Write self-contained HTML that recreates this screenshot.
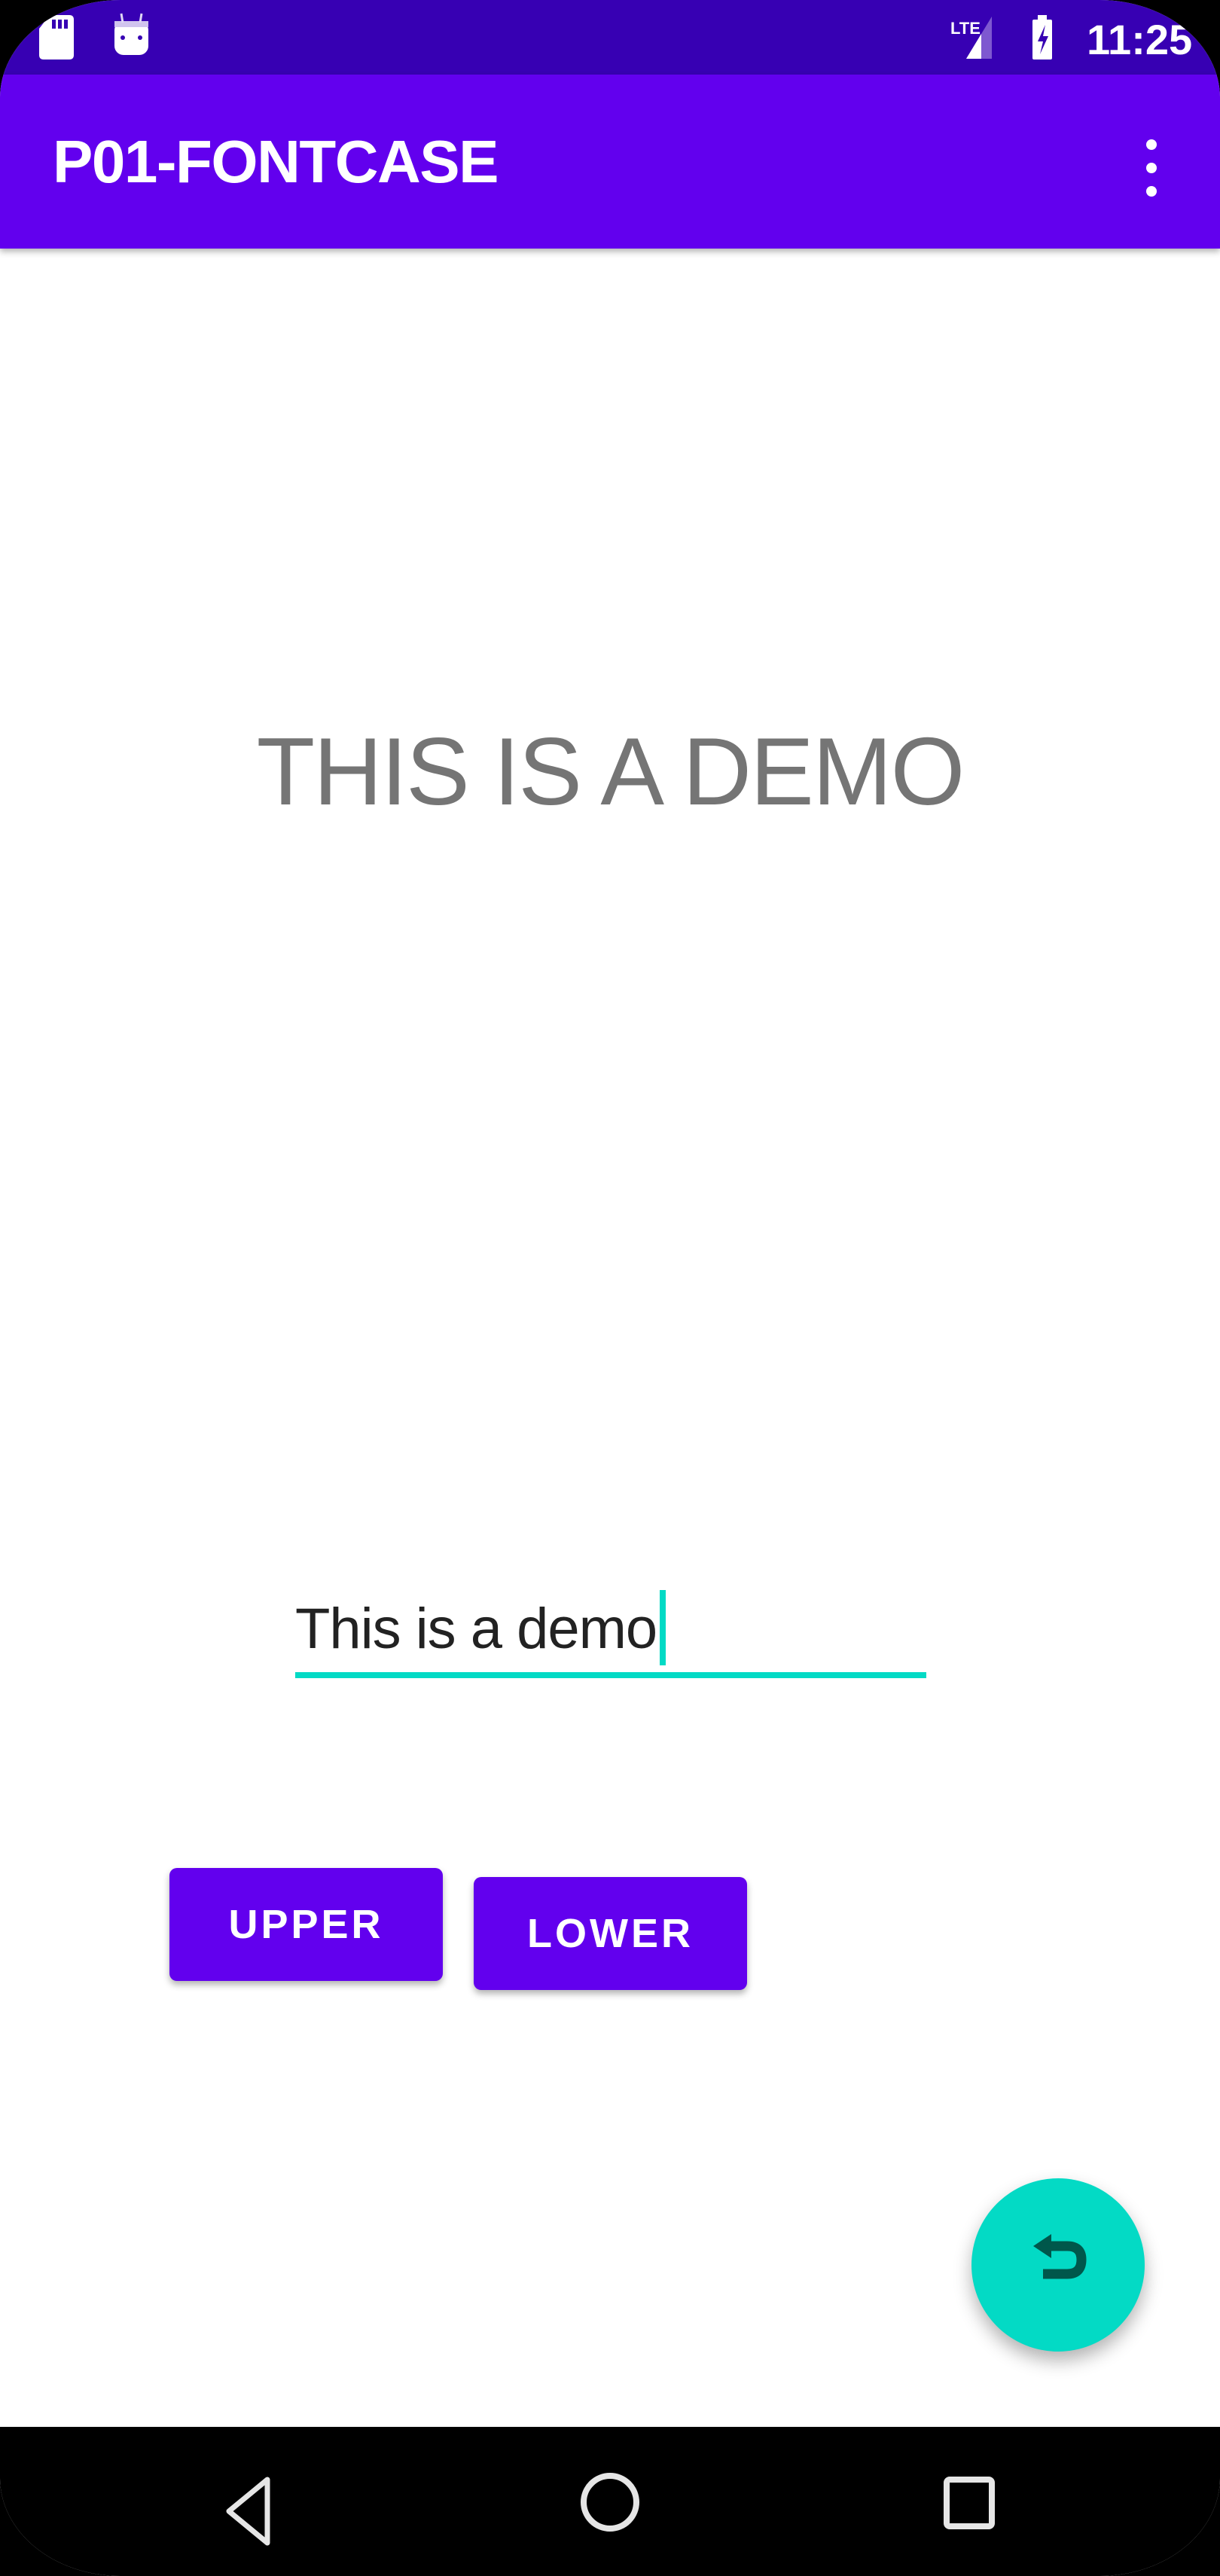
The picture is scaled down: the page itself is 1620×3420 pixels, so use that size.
<!DOCTYPE html>
<html><head><meta charset="utf-8"><style>
*{margin:0;padding:0;box-sizing:border-box}
html,body{width:1620px;height:3420px;background:#000;overflow:hidden}
.ph{position:absolute;left:0;top:0;width:1620px;height:3420px;background:#fff;border-radius:160px 160px 160px 160px/130px 130px 130px 130px;overflow:hidden;font-family:"Liberation Sans",sans-serif}
.sb{position:absolute;left:0;top:0;width:1620px;height:99px;background:#3700B3}
.ab{position:absolute;left:0;top:99px;width:1620px;height:231px;background:#6200EE;box-shadow:0 4px 8px rgba(0,0,0,.3)}
.title{position:absolute;left:70px;top:66px;color:#fff;font-size:80px;font-weight:bold;line-height:100px;letter-spacing:-1.5px}
.time{position:absolute;left:1443px;top:18px;color:#fff;font-size:56px;line-height:70px;font-weight:bold}
.main{position:absolute;left:0;width:1620px;top:944px;text-align:center;color:#757575;font-size:127px;line-height:160px;letter-spacing:-2px}
.et{position:absolute;left:392px;top:2118px;font-size:76px;line-height:90px;color:#222;letter-spacing:-1px}
.ul{position:absolute;left:392px;top:2220px;width:838px;height:8px;background:#03DAC5}
.cur{position:absolute;left:876px;top:2111px;width:8px;height:100px;background:#03DAC5}
.btn{position:absolute;width:363px;height:150px;background:#6200EE;border-radius:10px;box-shadow:0 5px 9px rgba(0,0,0,.3);color:#fff;font-size:54px;font-weight:bold;text-align:center;line-height:150px;letter-spacing:4px}
.fab{position:absolute;left:1290px;top:2892px;width:230px;height:230px;border-radius:50%;background:#03DAC5;box-shadow:0 12px 24px rgba(0,0,0,.3)}
.nav{position:absolute;left:0;top:3222px;width:1620px;height:198px;background:#000}
</style></head><body>
<div class="ph">
<div class="sb">
<svg width="1620" height="99" style="position:absolute;left:0;top:0">
<path d="M66 20 H92 Q98 20 98 26 V73 Q98 79 92 79 H58 Q52 79 52 73 V38 Z" fill="#fff"/>
<rect x="69" y="26" width="5" height="12" fill="#3700B3"/><rect x="77" y="26" width="5" height="12" fill="#3700B3"/><rect x="85" y="26" width="5" height="12" fill="#3700B3"/>
<rect x="152" y="28" width="45" height="45" rx="12" fill="#fff"/>
<rect x="152" y="28" width="45" height="8" fill="#d0c4ee"/>
<line x1="161" y1="18" x2="163" y2="30" stroke="#e0d8f4" stroke-width="3"/><line x1="188" y1="18" x2="186" y2="30" stroke="#e0d8f4" stroke-width="3"/>
<circle cx="163" cy="50" r="3" fill="#3700B3"/><circle cx="186" cy="50" r="3" fill="#3700B3"/>
<text x="1262" y="45" fill="#fff" font-family="Liberation Sans" font-size="22" font-weight="bold">LTE</text>
<path d="M1283 78 L1317 22 V78 Z" fill="#7e58d0"/><path d="M1283 78 L1303 45 V78 Z" fill="#fff"/>
<rect x="1371" y="26" width="26" height="53" rx="2" fill="#fff"/><rect x="1378" y="20" width="12" height="7" fill="#fff"/>
<path d="M1388 33 L1378 55 H1385 L1381 72 L1392 48 H1385 Z" fill="#3700B3"/>
</svg>
<div class="time">11:25</div>
</div>
<div class="ab">
<div class="title">P01-FONTCASE</div>
<svg width="30" height="80" style="position:absolute;left:1514px;top:84px"><circle cx="15" cy="9" r="7" fill="#fff"/><circle cx="15" cy="40" r="7" fill="#fff"/><circle cx="15" cy="71" r="7" fill="#fff"/></svg>
</div>
<div class="main">THIS IS A DEMO</div>
<div class="et">This is a demo</div>
<div class="cur"></div>
<div class="ul"></div>
<div class="btn" style="left:225px;top:2480px">UPPER</div>
<div class="btn" style="left:629px;top:2492px">LOWER</div>
<div class="fab"><svg width="230" height="230"><path d="M100 90 H127 Q146 90 146 108 Q146 127 127 127 H95" fill="none" stroke="#00574B" stroke-width="13"/><path d="M82 90 L106 74 L106 106 Z" fill="#00574B"/></svg></div>
<div class="nav">
<svg width="1620" height="198">
<path d="M355 70 L304 112 L355 154 Z" fill="none" stroke="#e6e6e6" stroke-width="7" stroke-linejoin="round"/>
<circle cx="810" cy="100" r="35" fill="none" stroke="#e6e6e6" stroke-width="8"/>
<rect x="1257" y="70" width="60" height="62" rx="4" fill="none" stroke="#e6e6e6" stroke-width="8"/>
</svg>
</div>
</div>
</body></html>
